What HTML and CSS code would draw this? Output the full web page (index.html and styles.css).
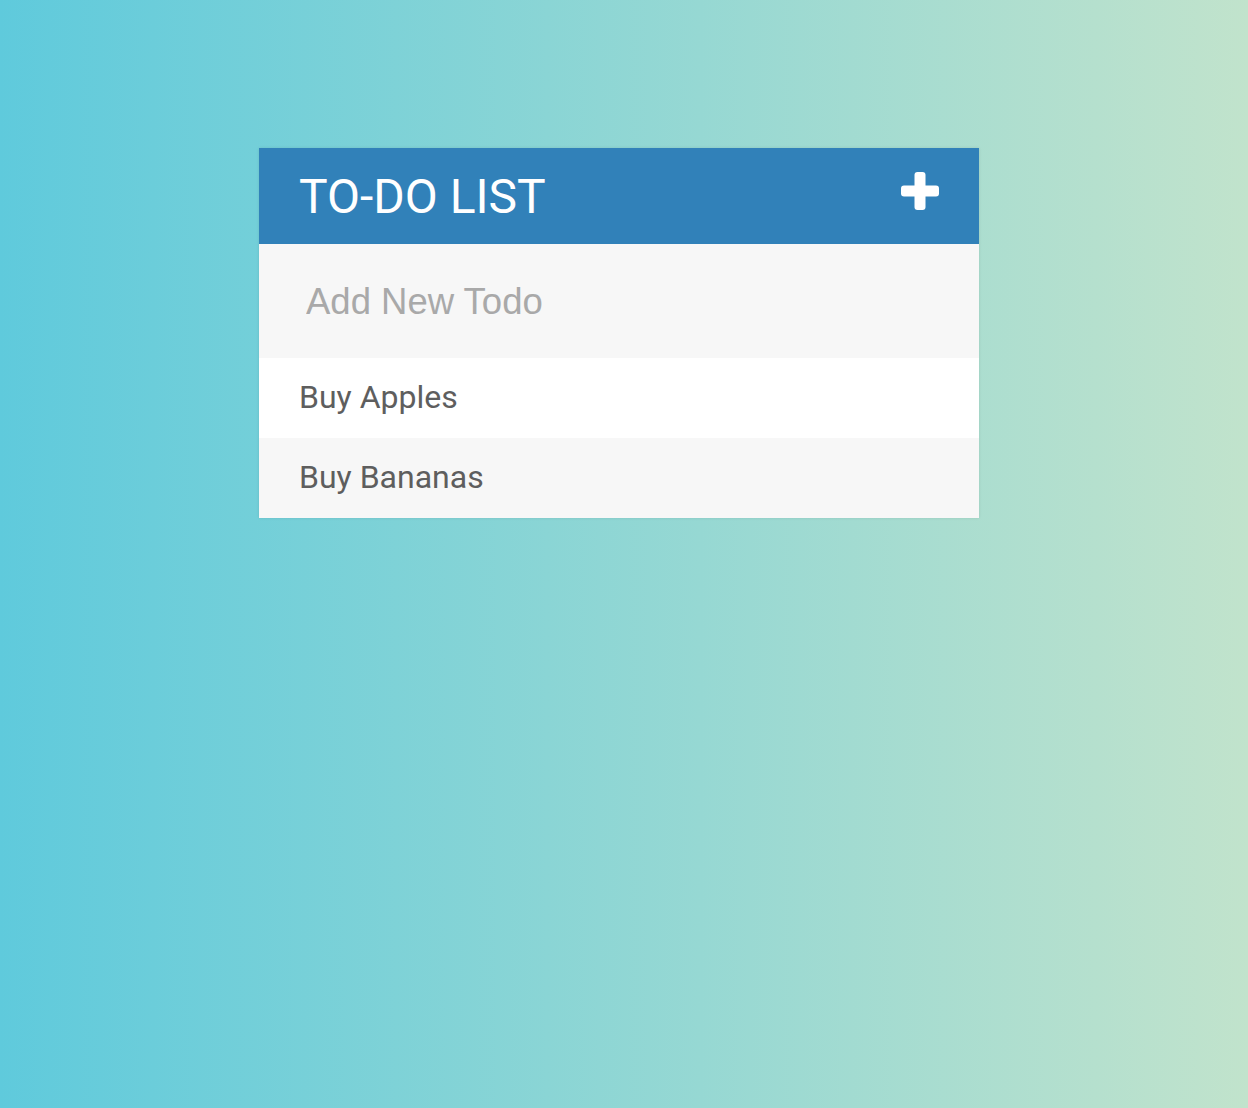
FILE: index.html
```html
<!DOCTYPE html>
<html lang="en">
<head>
<meta charset="utf-8">
<title>To-Do List</title>
<link rel="stylesheet" href="styles.css">
</head>
<body>
<main class="page">
  <section class="card">
    <header class="card-header">
      <h1 class="title">TO-DO LIST</h1>
      <button class="add-btn" type="button" aria-label="Add">
        <svg width="38" height="38" viewBox="0 0 38 38" aria-hidden="true">
          <rect x="13.5" y="0" width="11" height="38" rx="3" fill="#fff"/>
          <rect x="0" y="13.5" width="38" height="11" rx="3" fill="#fff"/>
        </svg>
      </button>
    </header>
    <div class="new-todo">
      <input class="new-input" type="text" placeholder="Add New Todo">
    </div>
    <ul class="todo-list">
      <li class="todo-item">Buy Apples</li>
      <li class="todo-item">Buy Bananas</li>
    </ul>
  </section>
</main>
</body>
</html>
```

FILE: styles.css
```css
html, body {
  margin: 0;
  padding: 0;
  height: 100%;
}
body {
  background: linear-gradient(to right, #5fcadc, #c1e3cc);
  font-family: Roboto, "Liberation Sans", sans-serif;
}
.page {
  display: flex;
  justify-content: center;
  padding-top: 148px;
  padding-right: 10px;
}
.card {
  width: 720px;
  background: #f7f7f7;
  box-shadow: 0 0 3px rgba(0, 0, 0, 0.1);
}
.card-header {
  height: 96px;
  background: #3181b9;
  display: flex;
  align-items: center;
  justify-content: space-between;
  padding: 0 40px;
  box-sizing: border-box;
}
.title {
  margin: 0;
  color: #fff;
  font-weight: 400;
  font-size: 48px;
  line-height: 1;
  padding-top: 2px;
}
.add-btn {
  border: 0;
  background: none;
  padding: 0;
  display: flex;
  margin-top: -10px;
}
.new-todo {
  height: 114px;
  display: flex;
  align-items: center;
  background: #f7f7f7;
}
.new-input {
  width: 100%;
  border: 0;
  background: transparent;
  outline: none;
  font-family: "Liberation Sans", Arial, sans-serif;
  font-size: 36.5px;
  color: #666;
  padding: 0 0 0 47px;
  margin-top: 2px;
}
.new-input::placeholder {
  color: #a9a9a9;
}
.todo-list {
  list-style: none;
  margin: 0;
  padding: 0;
}
.todo-item {
  height: 80px;
  box-sizing: border-box;
  display: flex;
  align-items: center;
  padding: 0 0 3px 40px;
  font-size: 32px;
  color: #5e5e5e;
  background: #f7f7f7;
}
.todo-item:nth-child(odd) {
  background: #fff;
}
```
